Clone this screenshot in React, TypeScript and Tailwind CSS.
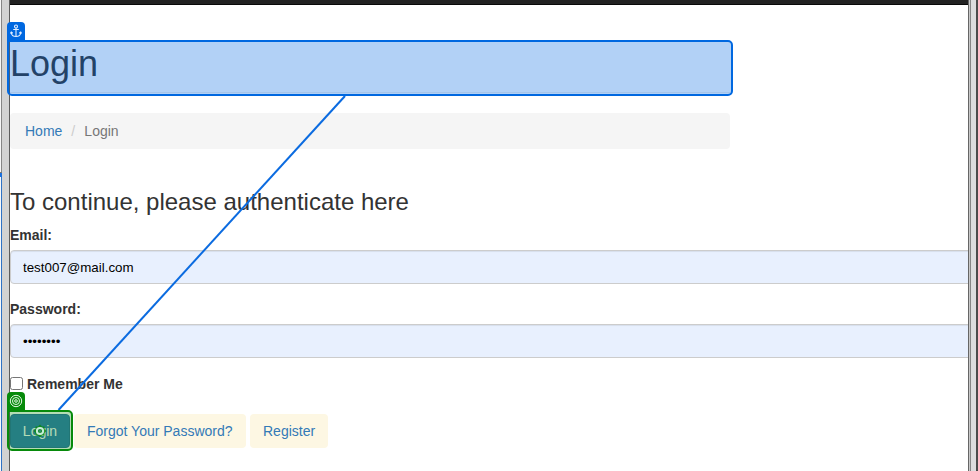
import React from "react";

function LeftFrame() {
  return (
    <div className="flex h-full w-[10px] shrink-0">
      <div className="flex w-[2px] flex-col">
        <div className="flex h-[172px]">
          <div className="w-px bg-[#f6f6f6]" />
          <div className="w-px bg-[#858585]" />
        </div>
        <div className="h-px bg-[#777]" />
        <div className="h-[4px] bg-[#1a6fdc]" />
        <div className="flex flex-1">
          <div className="w-px bg-[#f6f9fd]" />
          <div className="w-px bg-[#2f72c4]" />
        </div>
      </div>
      <div className="w-[7px] bg-[#d2d2d2]" />
      <div className="w-px bg-[#5c5c5c]" />
    </div>
  );
}

function RightFrame() {
  return (
    <div className="flex h-full w-[10px] shrink-0">
      <div className="w-px bg-[#666]" />
      <div className="w-px bg-[#c8c8c8]" />
      <div className="w-px bg-[#858585]" />
      <div className="w-[5px] bg-[#dcdcdd]" />
      <div className="w-[2px] bg-[#4b4b4b]" />
    </div>
  );
}

const inputClass =
  "block h-[34px] w-[980px] shrink-0 rounded-[4px] border border-[#ccc] bg-[#e8f0fe] px-3 text-[13.333px] text-black shadow-[inset_0_1px_1px_rgba(0,0,0,0.075)] outline-none";

function Page() {
  return (
    <main className="flex min-w-0 flex-1 flex-col items-start overflow-hidden bg-white">
      <div className="h-[5px] w-full shrink-0 border-b border-[#080808] bg-[#222]" />
      <header className="mt-[39px] w-[720px] border-b border-[#eee] pb-[8px]">
        <h1 className="text-[36px] leading-[40px]">Login</h1>
      </header>
      <nav className="mt-5 flex h-9 w-[720px] shrink-0 items-center rounded-[4px] bg-[#f5f5f5] px-[15px] leading-5">
        <a className="text-[#337ab7]">Home</a>
        <span className="w-[22px] pl-[9px] text-[#ccc]">/</span>
        <span className="text-[#777]">Login</span>
      </nav>
      <h3 className="mt-[40px] text-[24px] leading-[26px]">To continue, please authenticate here</h3>
      <form className="mt-[10px] flex flex-col items-start">
        <label className="mb-[5px] h-5 font-bold leading-5">Email:</label>
        <input className={inputClass} type="text" defaultValue="test007@mail.com" />
        <label className="mt-[15px] mb-[5px] h-5 font-bold leading-5">Password:</label>
        <input className={inputClass} type="password" defaultValue="password" />
        <label className="mt-4 flex h-5 items-start font-bold leading-5">
          <input type="checkbox" className="mt-[3px] mr-1 size-[13px]" />
          Remember Me
        </label>
        <div className="mt-5 flex h-[34px] leading-5">
          <button type="button" className="w-[60px] rounded-[4px] border border-[#2e6da4] bg-[#337ab7] text-white">Login</button>
          <a className="ml-[4px] w-[172px] rounded-[4px] bg-[#fdf7e3] px-[13px] py-[7px] whitespace-nowrap text-[#337ab7]">Forgot Your Password?</a>
          <a className="ml-1 w-[78px] rounded-[4px] bg-[#fdf7e3] px-[13px] py-[7px] text-[#337ab7]">Register</a>
        </div>
      </form>
    </main>
  );
}

function Annotations() {
  return (
    <>
      <svg className="pointer-events-none absolute inset-0" width="978" height="471" fill="none">
        <path d="M345 96L58.500 410" stroke="#0b6be0" strokeWidth="2" />
      </svg>
      <div className="absolute top-[40px] left-[7px] h-[56px] w-[726px] rounded-[5px] rounded-tl-none border-2 border-[#0068e0] bg-[#0068e0]/30" />
      <div className="absolute top-[22px] left-[7px] flex h-[18px] w-[18px] items-center justify-center rounded-t-[4px] bg-[#0068e0]">
        <svg width="12" height="14" viewBox="0 0 12 14" fill="none" stroke="#e4efff" strokeWidth="1.100">
          <circle cx="6" cy="2.500" r="1.500" />
          <path d="M6 4V12.500M3.200 5.500H8.800M1.300 8V8.800C1.500 11 3.500 12.500 6 12.500S10.500 11 10.700 8.800V8M0.400 9.500L1.300 8L2.800 9.200M11.600 9.500L10.700 8L9.200 9.200" />
        </svg>
      </div>
      <div className="absolute top-[410px] left-[7px] h-[41px] w-[66px] rounded-[5px] rounded-tl-none border-2 border-[#078a0b] bg-[#078a0b]/30" />
      <div className="absolute top-[392px] left-[7px] flex h-[18px] w-[18px] items-center justify-center rounded-t-[4px] bg-[#078a0b]">
        <svg width="14" height="14" viewBox="0 0 14 14" fill="none" stroke="#e2f5e2">
          <circle cx="7" cy="7" r="5.700" />
          <circle cx="7" cy="7" r="3.500" />
          <circle cx="7" cy="7" r="1.300" />
        </svg>
      </div>
      <svg className="absolute top-[423px] left-[32px]" width="16" height="16" viewBox="0 0 16 16" fill="none">
        <path d="M8 1.500L10 3.500H12.500V6L14.500 8L12.500 10V12.500H10L8 14.500L6 12.500H3.500V10L1.500 8L3.500 6V3.500H6Z" fill="#078a0b" fillOpacity=".8" />
        <circle cx="8" cy="8" r="3.100" stroke="#c7edda" strokeWidth="2" />
        <circle cx="8" cy="8" r="1.300" fill="#2c8d6c" />
      </svg>
    </>
  );
}

export default function App() {
  return (
    <div className="relative flex h-[471px] w-[978px] overflow-hidden bg-white font-['Liberation_Sans',Arial,sans-serif] text-[14px] text-[#333]">
      <LeftFrame />
      <Page />
      <RightFrame />
      <Annotations />
    </div>
  );
}
